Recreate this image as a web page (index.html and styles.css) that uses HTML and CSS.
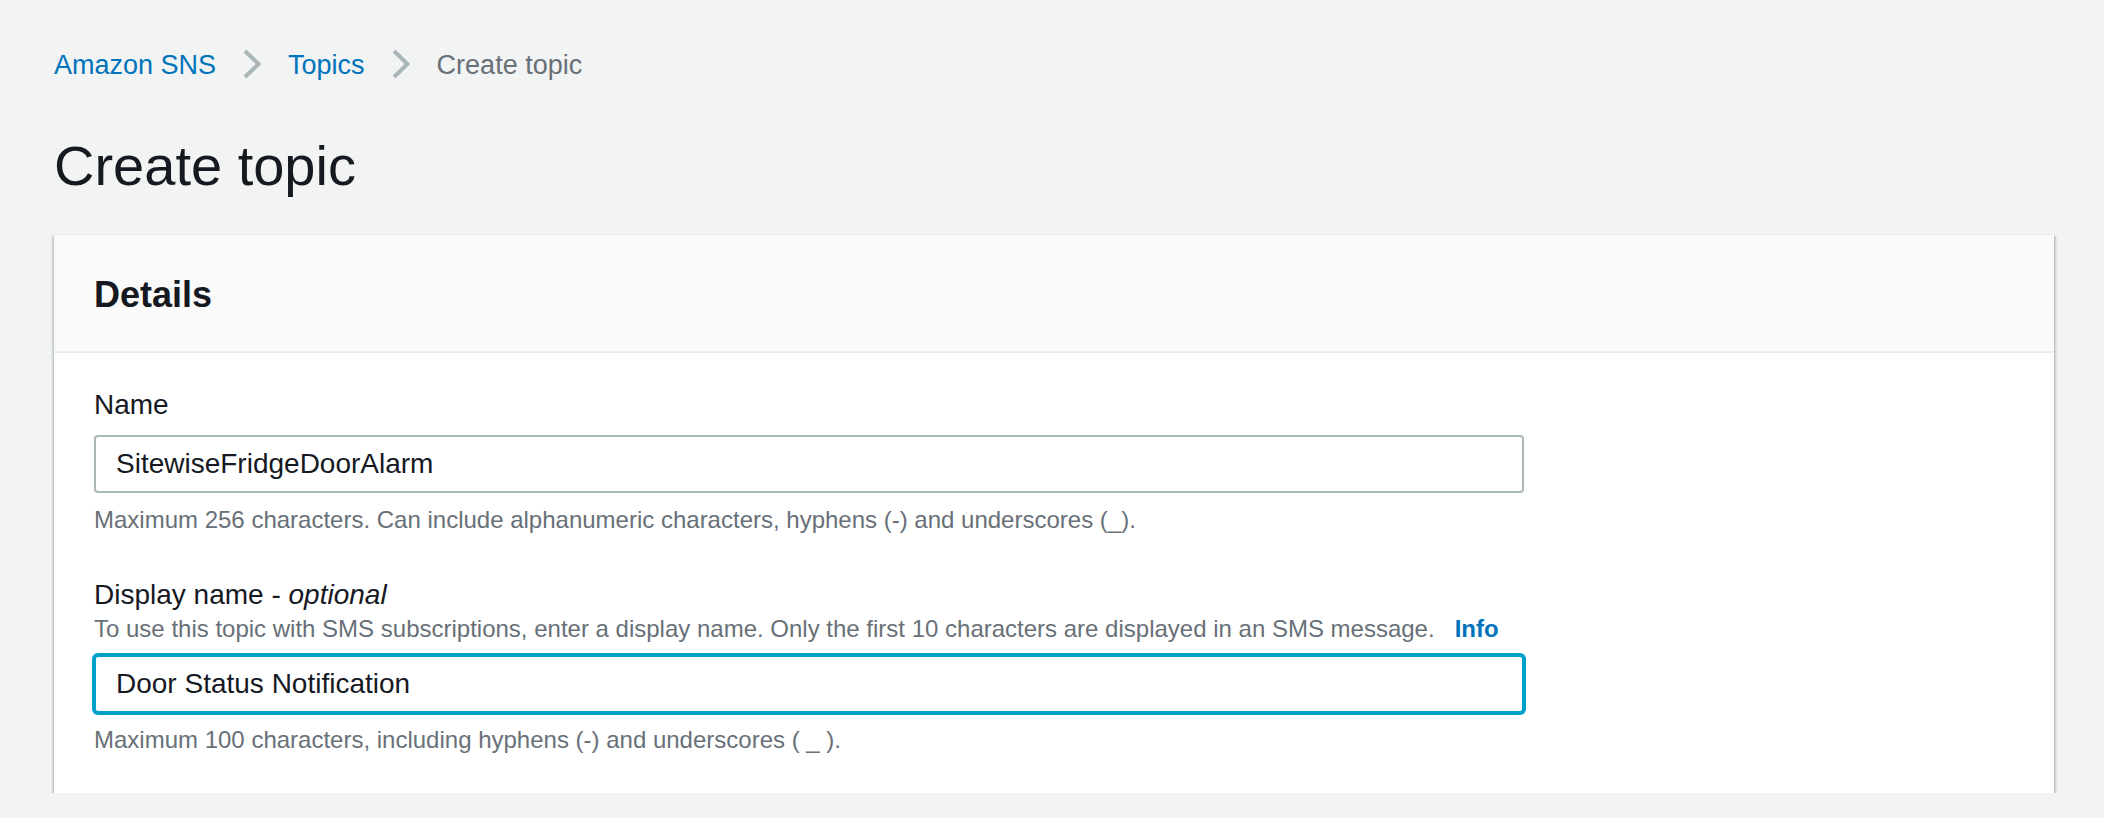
FILE: index.html
```html
<!DOCTYPE html>
<html lang="en">
<head>
<meta charset="utf-8">
<title>Create topic</title>
<link rel="stylesheet" href="styles.css">
</head>
<body>
<main class="page">
  <nav class="breadcrumbs">
    <a class="crumb-link" href="#">Amazon SNS</a>
    <svg class="chev" width="18" height="30" viewBox="0 0 18 30"><polyline points="2,2 15.5,15 2,28" fill="none" stroke="#aab7b8" stroke-width="4"/></svg>
    <a class="crumb-link" href="#">Topics</a>
    <svg class="chev" width="18" height="30" viewBox="0 0 18 30"><polyline points="2,2 15.5,15 2,28" fill="none" stroke="#aab7b8" stroke-width="4"/></svg>
    <span class="crumb-current">Create topic</span>
  </nav>
  <h1 class="title">Create topic</h1>
  <section class="card">
    <header class="card-head">
      <h2 class="card-title">Details</h2>
    </header>
    <div class="card-body">
      <div class="field">
        <label class="label">Name</label>
        <div class="input">SitewiseFridgeDoorAlarm</div>
        <p class="hint">Maximum 256 characters. Can include alphanumeric characters, hyphens (-) and underscores (_).</p>
      </div>
      <div class="field field-second">
        <label class="label">Display name - <i>optional</i></label>
        <p class="desc">To use this topic with SMS subscriptions, enter a display name. Only the first 10 characters are displayed in an SMS message.<a class="info" href="#">Info</a></p>
        <div class="input input-focus">Door Status Notification</div>
        <p class="hint">Maximum 100 characters, including hyphens (-) and underscores ( _ ).</p>
      </div>
    </div>
  </section>
</main>
</body>
</html>
```
FILE: styles.css
```css
html, body {
  margin: 0;
  padding: 0;
  background: #f2f3f3;
}
body {
  font-family: "Liberation Sans", Arial, sans-serif;
  color: #16191f;
}
.page {
  padding: 45px 50px 0 54px;
}
.breadcrumbs {
  display: flex;
  align-items: center;
  gap: 27px;
  height: 40px;
  font-size: 27px;
  line-height: 40px;
}
.crumb-link {
  color: #0073bb;
  text-decoration: none;
}
.crumb-current {
  color: #687078;
}
.chev {
  display: block;
  margin-top: -2px;
}
.title {
  margin: 49px 0 0 0;
  font-size: 56px;
  line-height: 64px;
  font-weight: 400;
  color: #16191f;
}
.card {
  margin-top: 37px;
  width: 2000px;
  background: #ffffff;
  box-shadow: 0 2px 2px 0 rgba(0, 28, 36, 0.3), 2px 2px 2px 0 rgba(0, 28, 36, 0.15), -2px 2px 2px 0 rgba(0, 28, 36, 0.12);
}
.card-head {
  background: #fafafa;
  padding: 38px 40px 34px 40px;
  border-top: 1px solid #eaeded;
  border-bottom: 2px solid #eaeded;
  margin-top: -1px;
}
.card-title {
  margin: 0;
  font-size: 36px;
  line-height: 44px;
  font-weight: 700;
}
.card-body {
  padding: 34px 40px 37px 40px;
}
.label {
  display: block;
  font-size: 28px;
  line-height: 36px;
  color: #16191f;
}
.field > .label {
  margin-bottom: 12px;
}
.field-second {
  margin-top: 41px;
}
.field-second > .label {
  margin-bottom: 0;
}
.input {
  box-sizing: border-box;
  width: 1430px;
  height: 58px;
  border: 2px solid #aab7b8;
  border-radius: 4px;
  padding: 0 20px;
  font-size: 28px;
  line-height: 54px;
  color: #16191f;
  background: #ffffff;
}
.input-focus {
  margin-top: 10px;
  border-color: #00a1c9;
  box-shadow: 0 0 0 2px #00a1c9;
}
.hint {
  margin: 11px 0 0 0;
  font-size: 24px;
  line-height: 32px;
  color: #687078;
}
.desc {
  margin: 0;
  font-size: 24px;
  line-height: 32px;
  color: #687078;
}
.info {
  margin-left: 20px;
  color: #0073bb;
  font-weight: 700;
  text-decoration: none;
}
```
